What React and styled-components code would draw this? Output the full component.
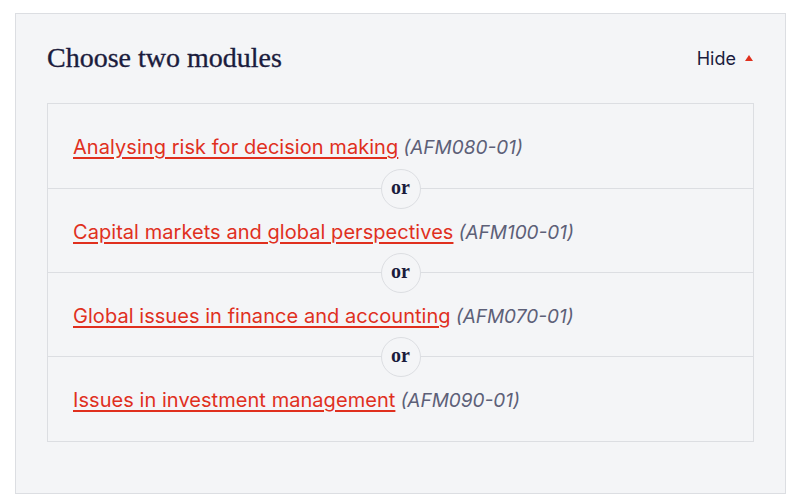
import React, { useState } from "react";
import styled, { createGlobalStyle } from "styled-components";

const GlobalStyle = createGlobalStyle`
  body {
    margin: 0;
    background: #ffffff;
    font-family: "Inter", "Liberation Sans", sans-serif;
  }
`;

const Page = styled.div`
  padding: 13px 14px 8px 15px;
`;

const Panel = styled.section`
  box-sizing: border-box;
  width: 771px;
  height: 481px;
  border: 1px solid #dcdee2;
  background: #f4f5f7;
  padding: 30px 31px 0 31px;
`;

const Header = styled.div`
  display: flex;
  align-items: center;
  justify-content: space-between;
  height: 28px;
  margin-bottom: 31px;
`;

const Title = styled.h2`
  margin: 0;
  font-family: "Liberation Serif", serif;
  font-weight: 400;
  font-size: 28px;
  line-height: 28px;
  color: #1b1c3d;
  -webkit-text-stroke: 0.35px #1b1c3d;
`;

const Toggle = styled.button`
  display: flex;
  align-items: center;
  gap: 9px;
  margin-right: 1px;
  border: none;
  background: none;
  padding: 0;
  cursor: pointer;
  font-family: "Inter", "Liberation Sans", sans-serif;
  font-size: 18px;
  color: #1b1c3d;
`;

const Caret = styled.span`
  width: 0;
  height: 0;
  border-left: 4.5px solid transparent;
  border-right: 4.5px solid transparent;
  border-bottom: 6px solid #e0301e;
  transform: ${(p) => (p.$open ? "none" : "rotate(180deg)")};
`;

const List = styled.div`
  border: 1px solid #dcdee2;
`;

const Row = styled.div`
  position: relative;
  box-sizing: border-box;
  display: flex;
  align-items: center;
  height: ${(p) => (p.$last ? "85px" : "84px")};
  padding: 2px 25px 0;
  border-top: ${(p) => (p.$first ? "none" : "1px solid #dcdee2")};
`;

const ModuleLink = styled.a`
  color: #e0301e;
  font-size: 20px;
  letter-spacing: 0.05px;
  text-decoration: underline;
  text-underline-offset: 3px;
  text-decoration-thickness: 1.5px;
  cursor: pointer;
`;

const Code = styled.span`
  margin-left: 5px;
  color: #5d6078;
  font-style: italic;
  font-size: 19px;
`;

const OrBadge = styled.span`
  position: absolute;
  left: 50%;
  bottom: -21px;
  transform: translateX(-50%);
  z-index: 1;
  box-sizing: border-box;
  width: 40px;
  height: 40px;
  border-radius: 50%;
  border: 1px solid #dcdee2;
  background: #f4f5f7;
  display: flex;
  align-items: center;
  justify-content: center;
  font-family: "Liberation Serif", serif;
  font-weight: 700;
  font-size: 20px;
  color: #1b1c3d;
  padding-bottom: 3px;
`;

const modules = [
  { name: "Analysing risk for decision making", code: "AFM080-01" },
  { name: "Capital markets and global perspectives", code: "AFM100-01" },
  { name: "Global issues in finance and accounting", code: "AFM070-01" },
  { name: "Issues in investment management", code: "AFM090-01" },
];

export default function App() {
  const [open, setOpen] = useState(true);

  return (
    <Page>
      <GlobalStyle />
      <Panel>
        <Header>
          <Title>Choose two modules</Title>
          <Toggle onClick={() => setOpen(!open)}>
            {open ? "Hide" : "Show"}
            <Caret $open={open} />
          </Toggle>
        </Header>
        {open && (
          <List>
            {modules.map((m, i) => (
              <Row
                key={m.code}
                $first={i === 0}
                $last={i === modules.length - 1}
              >
                <span>
                  <ModuleLink>{m.name}</ModuleLink>
                  <Code>({m.code})</Code>
                </span>
                {i < modules.length - 1 && <OrBadge>or</OrBadge>}
              </Row>
            ))}
          </List>
        )}
      </Panel>
    </Page>
  );
}
